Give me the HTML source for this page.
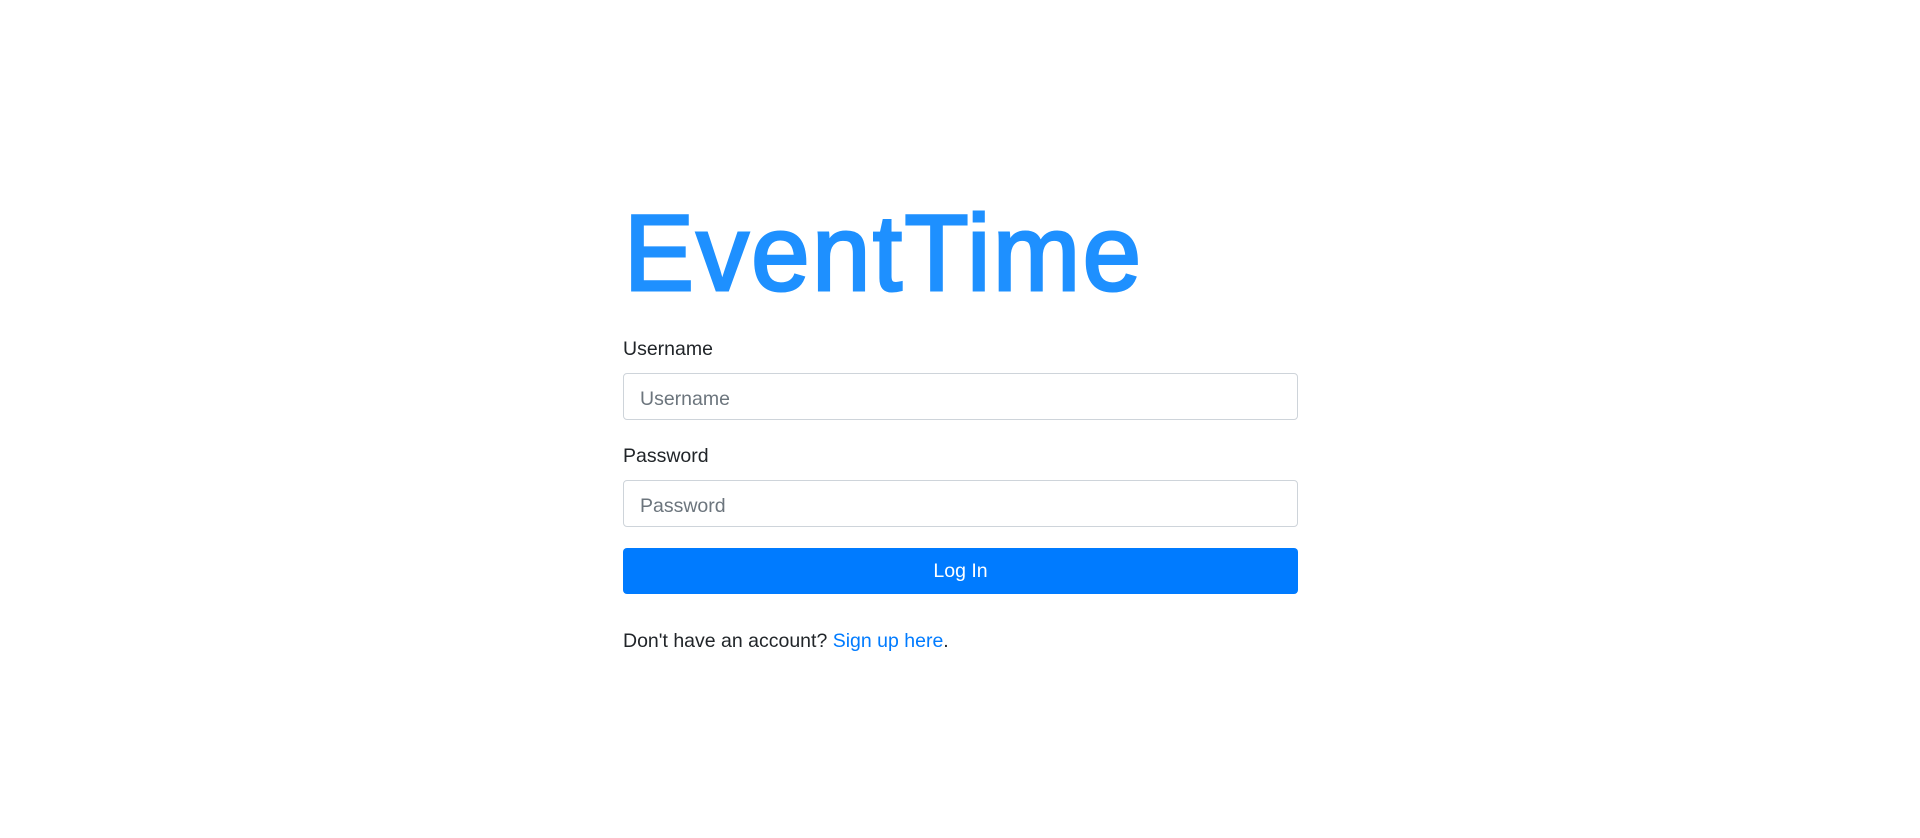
<!DOCTYPE html>
<html><head><style>
body{margin:0;width:1920px;height:838px;background:#fff;font-family:"Liberation Sans",sans-serif;color:#212529;position:relative;overflow:hidden}
.a{position:absolute;font-size:19.5px;line-height:24px;white-space:nowrap}
.t{position:absolute;left:624px;top:198px;font-size:108px;line-height:110px;color:#1e90ff;-webkit-text-stroke:3px #1e90ff;letter-spacing:2.6px;transform-origin:left;transform:scaleX(0.97);white-space:nowrap}
.in{position:absolute;left:623px;width:673px;height:45px;border:1px solid #ced4da;border-radius:4px;box-sizing:content-box}
.ph{color:#6c757d}
.btn{position:absolute;left:623px;top:548px;width:675px;height:46px;background:#007bff;border-radius:4px;color:#fff;font-size:19.5px;line-height:46px;text-align:center}
a{color:#007bff;text-decoration:none}
</style></head><body>
<div class="t">EventTime</div>
<div class="a" style="left:623px;top:337px">Username</div>
<div class="in" style="top:373px"></div>
<div class="a ph" style="left:640px;top:387px">Username</div>
<div class="a" style="left:623px;top:444px">Password</div>
<div class="in" style="top:480px"></div>
<div class="a ph" style="left:640px;top:494px">Password</div>
<div class="btn">Log In</div>
<div class="a" style="left:623px;top:629px">Don't have an account? <a>Sign up here</a>.</div>
</body></html>
